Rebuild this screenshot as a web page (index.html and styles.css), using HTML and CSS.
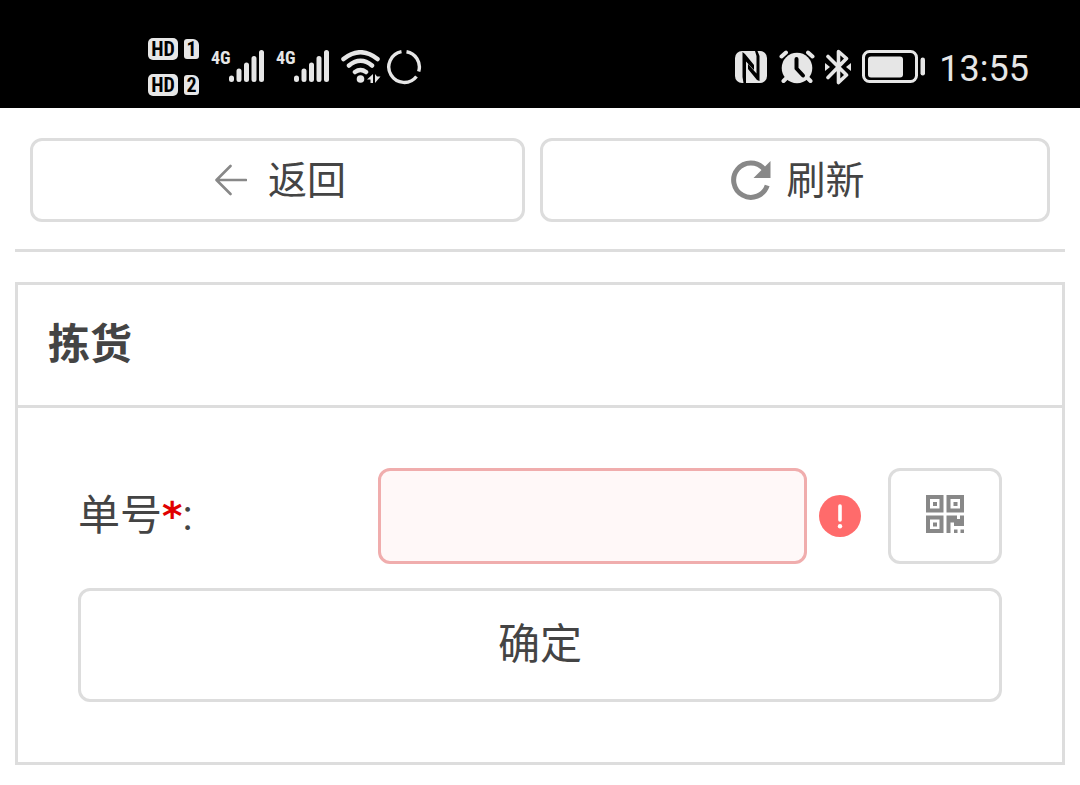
FILE: index.html
```html
<!DOCTYPE html>
<html lang="zh-CN">
<head>
<meta charset="utf-8">
<meta name="viewport" content="width=device-width, initial-scale=1">
<title>拣货</title>
<link rel="stylesheet" href="styles.css">
</head>
<body>
<header class="status">
  <div class="status-group">
    <div class="sims">
      <div class="sim"><span class="hd">HD</span><span class="slot">1</span></div>
      <div class="sim"><span class="hd">HD</span><span class="slot">2</span></div>
    </div>
    <div class="signal">
      <span class="net">4G</span>
      <svg class="bars" viewBox="0 0 36 34" width="36" height="34"><path d="M2.500 28v1.500M10 21v8.500M17.500 15v14.500M25 8.500v21M32.500 2.500v27"/></svg>
    </div>
    <div class="signal">
      <span class="net">4G</span>
      <svg class="bars" viewBox="0 0 36 34" width="36" height="34"><path d="M2.500 28v1.500M10 21v8.500M17.500 15v14.500M25 8.500v21M32.500 2.500v27"/></svg>
    </div>
    <svg class="wifi" viewBox="0 0 40 34" width="40" height="34">
      <g fill="none" stroke="#e6e6e6" stroke-width="4.500" stroke-linecap="round"><path d="M2.500 9Q19.500-4.500 36.500 9M8 15.500Q19.500 6 31 15.500M14 22Q19.500 18 25 22"/></g>
      <circle cx="19.500" cy="29" r="3.800" fill="#e6e6e6"/>
      <path d="M32 24v9h-2.500v-3.500H26zM34 33v-9l2 2.500h3.500z" fill="#e6e6e6"/>
    </svg>
    <svg class="ring" viewBox="0 0 36 36" width="36" height="36"><path d="M20.500 2.700A15.500 15.500 0 0 1 32.700 22.500M30.500 27.500A15.500 15.500 0 1 1 15.500 2.700" fill="none" stroke="#e6e6e6" stroke-width="3.400"/></svg>
  </div>
  <div class="status-group">
    <svg class="nfc" viewBox="0 0 32 32" width="32" height="32"><rect width="32" height="32" rx="7" fill="#e6e6e6"/><path d="M7.500 1 10 3 19 14V19L11 10.500V32H8.500L7.500 26zM20 0H22.500L24.500 5V30L22 29 13 18V13L21.500 22.500V5z"/></svg>
    <svg class="alarm" viewBox="0 0 36 34" width="36" height="34"><circle cx="18" cy="18" r="15.300" fill="#e6e6e6"/><path d="M2.500 6.500 7 2.500M33.500 6.500 29 2.500M4.500 31l3-3M31.500 31l-3-3" stroke="#e6e6e6" stroke-width="4" stroke-linecap="round"/><path d="M17.500 9v9.500l6.500 7" fill="none" stroke="#000" stroke-width="4" stroke-linecap="round" stroke-linejoin="round"/></svg>
    <svg class="bluetooth" viewBox="0 0 26 36" width="26" height="36"><path d="M3 7.500 21.500 26 13.500 33.500V2.500L21.500 9.500 3 28.500" fill="none" stroke="#e6e6e6" stroke-width="3.600" stroke-linecap="round" stroke-linejoin="round"/><path d="M0 14l5 4-5 4zM26 14l-5 4 5 4z" fill="#e6e6e6"/></svg>
    <svg class="battery" viewBox="0 0 64 34" width="64" height="34"><rect x="1.500" y="1.500" width="53" height="30" rx="6" fill="none" stroke="#e6e6e6" stroke-width="3"/><rect x="6" y="6.500" width="35" height="21" rx="3" fill="#e6e6e6"/><rect x="58.500" y="7.500" width="4.500" height="18" rx="2.200" fill="#e6e6e6"/></svg>
    <time class="clock">13:55</time>
  </div>
</header>
<main class="page">
  <nav class="toolbar">
    <button class="btn back" type="button">
      <svg viewBox="0 0 32 32" width="32" height="32"><path d="M31 16H2M15.500 2 1.500 16l14 14" fill="none" stroke="#888" stroke-width="2.600" stroke-linecap="round" stroke-linejoin="round"/></svg>
      <span>返回</span>
    </button>
    <button class="btn refresh" type="button">
      <svg viewBox="0 0 40 40" width="40" height="40"><path d="M36.200 25.500A17.200 17.200 0 1 1 33 9" fill="none" stroke="#888" stroke-width="5"/><path d="M39.500 1v17H22.500z" fill="#888"/></svg>
      <span>刷新</span>
    </button>
  </nav>
  <section class="card">
    <h1 class="card-title">拣货</h1>
    <form class="form">
      <div class="row">
        <label class="label" for="order">单号<span class="required">*</span>:</label>
        <input class="field" id="order" type="text">
        <svg class="error" viewBox="0 0 42 42" width="42" height="42"><circle cx="21" cy="21" r="21" fill="#ff6b6b"/><path d="M21 11v14" stroke="#fff" stroke-width="3.600" stroke-linecap="round"/><circle cx="21" cy="31.200" r="2.200" fill="#fff"/></svg>
        <button class="btn scan" type="button" aria-label="扫码">
          <svg viewBox="0 0 38 38" width="38" height="38" fill="#888"><path fill-rule="evenodd" d="M0 0h17.500v17.500H0zM4 4v9.500h9.500V4zM20.500 0H38v17.500H20.500zM24.500 4v9.500H34V4zM0 20.500h17.500V38H0zM4 24.500V34h9.500v-9.500z"/><path d="M7 7h4v4H7zM27.500 7h4v4h-4zM7 27.500h4v4H7zM20.500 20.500h10.500v3.500h3v-3.500h4v10.500H28v-3.500h-3.500V38h-4zM28 34.500h3.500V38H28zM34.500 34.500H38V38h-3.500z"/></svg>
        </button>
      </div>
      <button class="btn submit" type="submit">确定</button>
    </form>
  </section>
</main>
</body>
</html>
```
FILE: styles.css
```css
* {
  box-sizing: border-box;
}

body {
  margin: 0;
  background: #fff;
  color: #444;
  font-family: Roboto, "Noto Sans CJK SC", sans-serif;
}

svg {
  display: block;
  flex: none;
}

.status {
  display: flex;
  justify-content: space-between;
  height: 108px;
  padding: 26px 51px 0 148px;
  background: #000;
  color: #e6e6e6;
}

.status-group {
  display: flex;
  align-items: center;
  height: 82px;
}

.sims {
  display: grid;
  gap: 14px;
  margin-right: 12px;
}

.sim {
  display: flex;
  align-items: center;
  gap: 6px;
}

.hd,
.slot {
  height: 22px;
  border-radius: 5px;
  background: #e6e6e6;
  color: #000;
  font: bold 20px/22px "Roboto Condensed", "Liberation Sans Narrow", Roboto, sans-serif;
  text-align: center;
}

.hd {
  width: 30px;
}

.slot {
  width: 15px;
  height: 20px;
  border-radius: 3px 6px 3px 3px;
  line-height: 20px;
}

.signal {
  display: flex;
  align-items: flex-start;
  margin-right: 11px;
}

.net {
  width: 18px;
  font: bold 18px/16px "Roboto Condensed", "Liberation Sans Narrow", Roboto, sans-serif;
}

.bars {
  fill: none;
  stroke: #e6e6e6;
  stroke-width: 5;
  stroke-linecap: round;
}

.wifi {
  margin-right: 5px;
}

.nfc {
  margin-right: 12px;
}

.alarm {
  margin-right: 10px;
}

.bluetooth {
  margin-right: 11px;
}

.battery {
  margin-right: 13px;
}

.clock {
  padding-top: 4px;
  font-size: 36px;
  line-height: 40px;
}

.page {
  padding: 0 15px 20px;
}

.toolbar {
  display: grid;
  grid-template-columns: 33fr 34fr;
  gap: 15px;
  padding: 30px 15px 27px;
  border-bottom: 3px solid #ddd;
}

.btn {
  display: flex;
  align-items: center;
  justify-content: center;
  padding: 0;
  border: 3px solid #ddd;
  border-radius: 12px;
  background: #fff;
  color: #444;
  font-family: inherit;
  font-size: 39px;
  line-height: 60px;
}

.btn span {
  padding-top: 2px;
}

.toolbar .btn {
  height: 84px;
  padding-left: 6px;
}

.back {
  gap: 21px;
}

.refresh {
  gap: 15px;
}

.card {
  margin-top: 30px;
  border: 3px solid #ddd;
}

.card-title {
  margin: 0;
  padding: 30px;
  border-bottom: 3px solid #ddd;
  font-size: 42px;
  line-height: 60px;
}

.form {
  padding: 60px;
}

.row {
  display: flex;
  align-items: center;
  margin-bottom: 24px;
}

.label {
  flex: none;
  width: 300px;
  font-size: 42px;
  line-height: 60px;
}

.required {
  color: #e00000;
  font-family: "DejaVu Sans", sans-serif;
  font-size: 39px;
  font-weight: bold;
  line-height: 1;
}

.field {
  flex: 1;
  min-width: 0;
  height: 96px;
  padding: 0 18px;
  border: 3px solid #f0adad;
  border-radius: 12px;
  background: #fff8f8;
  font: inherit;
  font-size: 42px;
  outline: none;
}

.error {
  margin: 0 27px 0 12px;
}

.scan {
  width: 114px;
  height: 96px;
  padding-bottom: 4px;
}

.submit {
  width: 100%;
  height: 114px;
  font-size: 42px;
}
```
